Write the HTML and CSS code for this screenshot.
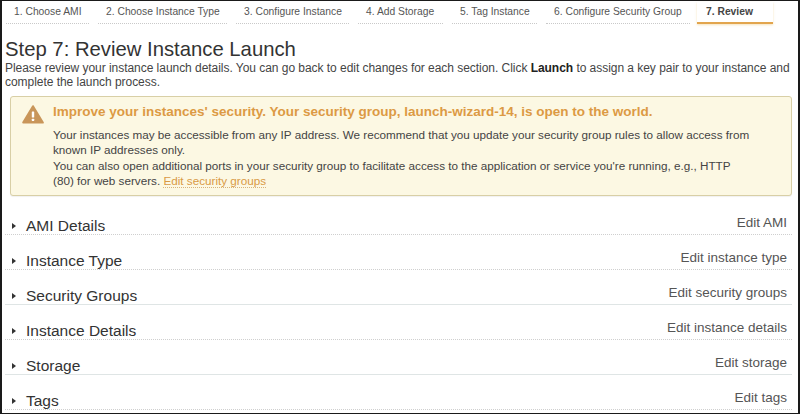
FILE: index.html
```html
<!DOCTYPE html>
<html>
<head>
<meta charset="utf-8">
<link rel="stylesheet" href="styles.css">
</head>
<body>
<div class="frame">
  <nav class="tabs">
    <span class="tab t1">1. Choose AMI</span>
    <span class="tab t2">2. Choose Instance Type</span>
    <span class="tab t3">3. Configure Instance</span>
    <span class="tab t4">4. Add Storage</span>
    <span class="tab t5">5. Tag Instance</span>
    <span class="tab t6">6. Configure Security Group</span>
    <span class="tab t7 active">7. Review</span>
  </nav>
  <main class="content">
    <h1 class="title">Step 7: Review Instance Launch</h1>
    <p class="intro">Please review your instance launch details. You can go back to edit changes for each section. Click <b>Launch</b> to assign a key pair to your instance and<br>complete the launch process.</p>
    <div class="warning">
      <svg class="warn-icon" width="22" height="19" viewBox="0 0 22 19">
        <path d="M11 1.2 L20.8 17.6 L1.2 17.6 Z" fill="#c9965a" stroke="#c9965a" stroke-width="2" stroke-linejoin="round"/>
        <rect x="9.8" y="6.5" width="2.4" height="6" rx="0.6" fill="#fff"/>
        <rect x="9.8" y="13.8" width="2.4" height="2.3" rx="0.5" fill="#fff"/>
      </svg>
      <div class="warn-body">
        <div class="warn-title">Improve your instances' security. Your security group, launch-wizard-14, is open to the world.</div>
        <div class="warn-text">Your instances may be accessible from any IP address. We recommend that you update your security group rules to allow access from<br>known IP addresses only.<br>You can also open additional ports in your security group to facilitate access to the application or service you're running, e.g., HTTP<br>(80) for web servers. <a class="warn-link">Edit security groups</a></div>
      </div>
    </div>
    <div class="sections">
      <div class="section"><span class="caret"></span><span class="sec-title">AMI Details</span><a class="edit">Edit AMI</a></div>
      <div class="section"><span class="caret"></span><span class="sec-title">Instance Type</span><a class="edit">Edit instance type</a></div>
      <div class="section solid"><span class="caret"></span><span class="sec-title">Security Groups</span><a class="edit">Edit security groups</a></div>
      <div class="section"><span class="caret"></span><span class="sec-title">Instance Details</span><a class="edit">Edit instance details</a></div>
      <div class="section solid"><span class="caret"></span><span class="sec-title">Storage</span><a class="edit">Edit storage</a></div>
      <div class="section"><span class="caret"></span><span class="sec-title">Tags</span><a class="edit">Edit tags</a></div>
    </div>
  </main>
</div>
</body>
</html>
```
FILE: styles.css
```css
html, body {
  margin: 0;
  padding: 0;
  background: #fff;
}
.frame {
  box-sizing: border-box;
  width: 800px;
  height: 414px;
  overflow: hidden;
  border-top: 1px solid #1a1a1a;
  border-bottom: 1px solid #1a1a1a;
  border-left: 2px solid #1a1a1a;
  border-right: 2px solid #1a1a1a;
  font-family: "Liberation Sans", Arial, sans-serif;
  color: #333;
}
.tabs {
  display: flex;
  gap: 9px;
  padding: 1px 0 0 4px;
}
.tab {
  box-sizing: border-box;
  font-size: 10.3px;
  line-height: 13px;
  color: #555;
  padding: 3px 0 4px 8px;
  border-bottom: 1px dotted #c9c9c9;
  white-space: nowrap;
  overflow: hidden;
}
.t1 { width: 83px; }
.t2 { width: 129px; }
.t3 { width: 113px; }
.t4 { width: 85px; }
.t5 { width: 85px; }
.t6 { width: 144px; margin-right: -2px; }
.t7 { width: 76px; }
.tab.active {
  color: #444;
  font-weight: bold;
  border-bottom: 2px solid #e2a54e;
  padding-left: 9px;
  padding-bottom: 4px;
  box-shadow: 0 1px 2px rgba(240, 200, 120, 0.5);
}
.content {
  padding: 0 6px 0 3px;
}
.title {
  font-size: 20.3px;
  font-weight: normal;
  line-height: 24px;
  margin: 13px 0 0 0;
  color: #333;
}
.intro {
  font-size: 12px;
  line-height: 14px;
  letter-spacing: -0.04px;
  margin: 0;
  color: #444;
  white-space: nowrap;
}
.intro b {
  color: #222;
}
.warning {
  display: flex;
  margin: 7px 0 0 5px;
  background: #fcf8e3;
  border: 1px solid #d8cfa6;
  border-radius: 3px;
  padding: 7px 8px 6px 11px;
  box-shadow: 0 1px 1px rgba(0,0,0,0.06);
}
.warn-icon {
  flex: none;
  margin-top: 1px;
  margin-right: 9px;
}
.warn-body {
  flex: 1;
}
.warn-title {
  font-size: 13.5px;
  line-height: 15px;
  font-weight: bold;
  color: #dc9a44;
  white-space: nowrap;
}
.warn-text {
  margin-top: 8px;
  font-size: 11.7px;
  line-height: 15.4px;
  color: #444;
  white-space: nowrap;
}
.warn-link {
  color: #d99a45;
  border-bottom: 1px dotted #d9b27a;
}
.sections {
  margin-top: 4px;
}
.section {
  display: flex;
  align-items: baseline;
  height: 34px;
  box-sizing: content-box;
  padding: 0 5px 0 0;
  border-bottom: 1px dotted #cfcfcf;
}
.section.solid {
  border-bottom: 1px solid #dfe5e5;
}
.caret {
  align-self: flex-end;
  width: 0;
  height: 0;
  border-top: 3.5px solid transparent;
  border-bottom: 3.5px solid transparent;
  border-left: 4px solid #333;
  margin: 0 10px 5px 7px;
}
.sec-title {
  align-self: flex-end;
  font-size: 15.5px;
  line-height: 16px;
  color: #333;
  flex: 1;
}
.edit {
  align-self: flex-end;
  font-size: 13.5px;
  line-height: 16px;
  color: #555;
  position: relative;
  top: -3px;
}
```
